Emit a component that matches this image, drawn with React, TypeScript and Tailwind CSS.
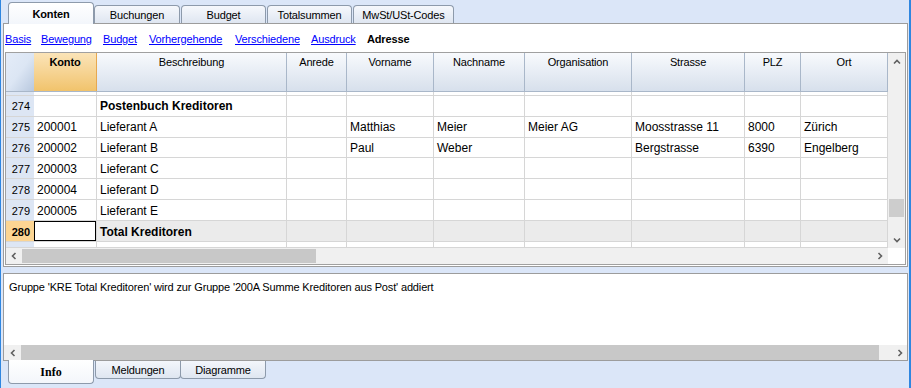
import React from 'react'

const UI = "font-['Liberation_Sans',Arial,sans-serif] text-[11px] leading-[13px]"

type Col = { key: string; label: string; w: string }

const COLS: Col[] = [
  { key: 'konto', label: 'Konto', w: 'w-[63px]' },
  { key: 'beschreibung', label: 'Beschreibung', w: 'w-[190px]' },
  { key: 'anrede', label: 'Anrede', w: 'w-[60px]' },
  { key: 'vorname', label: 'Vorname', w: 'w-[87px]' },
  { key: 'nachname', label: 'Nachname', w: 'w-[91px]' },
  { key: 'organisation', label: 'Organisation', w: 'w-[107px]' },
  { key: 'strasse', label: 'Strasse', w: 'w-[113px]' },
  { key: 'plz', label: 'PLZ', w: 'w-[56px]' },
  { key: 'ort', label: 'Ort', w: 'w-[87px]' },
]

type Row = { nr: number; cells: string[]; bold?: boolean; total?: boolean }

const ROWS: Row[] = [
  { nr: 274, cells: ['', 'Postenbuch Kreditoren'], bold: true },
  { nr: 275, cells: ['200001', 'Lieferant A', '', 'Matthias', 'Meier', 'Meier AG', 'Moosstrasse 11', '8000', 'Zürich'] },
  { nr: 276, cells: ['200002', 'Lieferant B', '', 'Paul', 'Weber', '', 'Bergstrasse', '6390', 'Engelberg'] },
  { nr: 277, cells: ['200003', 'Lieferant C'] },
  { nr: 278, cells: ['200004', 'Lieferant D'] },
  { nr: 279, cells: ['200005', 'Lieferant E'] },
  { nr: 280, cells: ['', 'Total Kreditoren'], bold: true, total: true },
]

// links with the slot each one takes in the bar
const LINKS: { label: string; w: string }[] = [
  { label: 'Basis', w: 'w-[36px]' },
  { label: 'Bewegung', w: 'w-[62px]' },
  { label: 'Budget', w: 'w-[46px]' },
  { label: 'Vorhergehende', w: 'w-[86px]' },
  { label: 'Verschiedene', w: 'w-[76px]' },
  { label: 'Ausdruck', w: 'w-[56px]' },
]

function Chevron({ dir }: { dir: 'up' | 'down' | 'left' | 'right' }) {
  const pts = {
    up: '1,5.5 4,2.5 7,5.5',
    down: '1,2.5 4,5.5 7,2.5',
    left: '5.5,1 2.5,4 5.5,7',
    right: '2.5,1 5.5,4 2.5,7',
  }[dir]
  return (
    <svg width="8" height="8" viewBox="0 0 8 8">
      <polyline points={pts} fill="none" stroke="#606060" strokeWidth="1.6" />
    </svg>
  )
}

function TopTab({ label, active, w, ml }: { label: string; active?: boolean; w: string; ml?: string }) {
  if (active) {
    return (
      <div
        className={`${w} ${ml ?? ''} relative z-10 mb-[-1px] flex h-[22px] justify-center rounded-t-[4px] border border-b-0 border-[#8d9aab] bg-gradient-to-b from-white to-[#f3f6fb] pt-[5px] font-bold text-black`}
      >
        {label}
      </div>
    )
  }
  return (
    <div
      className={`${w} ${ml ?? ''} flex h-[18px] justify-center rounded-t-[4px] border border-b-0 border-[#8d9aab] bg-gradient-to-b from-[#f6f8fc] to-[#dfe6f1] pt-[3px] text-black`}
    >
      {label}
    </div>
  )
}

function BottomTab({ label, active, w, ml }: { label: string; active?: boolean; w: string; ml?: string }) {
  if (active) {
    return (
      <div
        className={`${w} ${ml ?? ''} relative z-10 mt-[-1px] flex h-[24px] justify-center rounded-b-[4px] border border-t-0 border-[#8d9aab] bg-gradient-to-t from-[#f3f6fb] to-white pt-[6px] font-['Liberation_Serif',serif] text-[12px] font-bold tracking-normal text-black`}
      >
        {label}
      </div>
    )
  }
  return (
    <div
      className={`${w} ${ml ?? ''} flex h-[18px] justify-center rounded-b-[4px] border border-t-0 border-[#8d9aab] bg-gradient-to-t from-[#dfe6f1] to-[#f3f6fb] pt-[3px] text-black`}
    >
      {label}
    </div>
  )
}

function GridHeader() {
  return (
    <div className="flex h-[39px] border-b border-[#a9b7c9]">
      <div className="w-[28px] bg-gradient-to-br from-[#e4ecf8] via-[#dce6f4] to-[#b8c8de]" />
      {COLS.map((c) =>
        c.key === 'konto' ? (
          <div
            key={c.key}
            className={`${c.w} flex justify-center border-r border-[#e6a850] bg-gradient-to-b from-[#fbe4b8] to-[#f1c36b] pt-[3px] font-bold`}
          >
            {c.label}
          </div>
        ) : (
          <div
            key={c.key}
            className={`${c.w} flex justify-center border-r border-[#a9b7c9] bg-gradient-to-b from-[#f8fafd] to-[#d7e0ec] pt-[3px]`}
          >
            {c.label}
          </div>
        ),
      )}
    </div>
  )
}

function EmptyRow({ h }: { h: string }) {
  return (
    <div className={`flex ${h} border-b border-[#d6d6d6]`}>
      <div className="w-[28px] bg-[#dde6f4]" />
      {COLS.map((c) => (
        <div key={c.key} className={`${c.w} border-r border-[#d6d6d6]`} />
      ))}
    </div>
  )
}

function DataRow({ row }: { row: Row }) {
  return (
    <div className={`flex h-[21px] border-b border-[#d6d6d6] ${row.total ? 'bg-[#ebebeb]' : ''}`}>
      <div
        className={`flex w-[28px] items-center justify-end pr-[4px] pt-[2px] tracking-normal ${
          row.total ? 'bg-[#fcd593] font-bold' : 'bg-[#dde6f4]'
        }`}
      >
        {row.nr}
      </div>
      {COLS.map((c, i) => {
        const text = row.cells[i] ?? ''
        const selected = row.total && c.key === 'konto'
        return (
          <div key={c.key} className={`${c.w} border-r border-[#d6d6d6]`}>
            <div
              className={`flex h-full items-center overflow-hidden whitespace-nowrap pl-[3px] pt-[2px] text-[12px] tracking-normal ${
                row.bold && c.key === 'beschreibung' ? 'font-bold' : ''
              } ${selected ? 'border border-black bg-white' : ''}`}
            >
              {text}
            </div>
          </div>
        )
      })}
    </div>
  )
}

export default function App() {
  return (
    <div
      className={`${UI} flex h-[388px] w-[911px] flex-col overflow-hidden border-l border-r-2 border-[#2f86e0] bg-[#dbe6f8] tracking-[-0.15px] text-black`}
    >
      {/* top tabs */}
      <div className="flex h-[23px] items-end pl-[7px]">
        <TopTab label="Konten" active w="w-[86px]" />
        <TopTab label="Buchungen" w="w-[86px]" />
        <TopTab label="Budget" w="w-[85px]" ml="ml-[1px]" />
        <TopTab label="Totalsummen" w="w-[85px]" ml="ml-[1px]" />
        <TopTab label="MwSt/USt-Codes" w="w-[101px]" ml="ml-[1px]" />
      </div>

      {/* main panel */}
      <div className="ml-[2px] flex h-[244px] w-[905px] flex-col border border-[#9c9c9c] bg-white">
        <div className="flex h-[28px] items-start pl-[1px] pt-[9px]">
          {LINKS.map((l) => (
            <span key={l.label} className={`${l.w} shrink-0 whitespace-nowrap`}>
              <span className="text-[#0000ff] underline">{l.label}</span>
            </span>
          ))}
          <span className="font-bold">Adresse</span>
        </div>

        <div className="ml-[1px] flex h-[213px] w-[901px] flex-col border border-[#a0a0a0]">
          <div className="flex h-[195px]">
            <div className="flex w-[882px] flex-col overflow-hidden">
              <GridHeader />
              <EmptyRow h="h-[4px]" />
              {ROWS.map((r) => (
                <DataRow key={r.nr} row={r} />
              ))}
              <EmptyRow h="h-[6px]" />
            </div>
            {/* vertical scrollbar */}
            <div className="flex w-[17px] flex-col bg-[#f0f0f0]">
              <div className="flex h-[17px] items-center justify-center">
                <Chevron dir="up" />
              </div>
              <div className="h-[129px]" />
              <div className="mx-[1px] h-[18px] bg-[#cdcdcd]" />
              <div className="flex-1" />
              <div className="flex h-[17px] items-center justify-center">
                <Chevron dir="down" />
              </div>
            </div>
          </div>
          {/* horizontal scrollbar */}
          <div className="flex h-[16px]">
            <div className="flex w-[882px] bg-[#f0f0f0]">
              <div className="flex w-[16px] items-center justify-center">
                <Chevron dir="left" />
              </div>
              <div className="my-[1px] w-[294px] bg-[#c8c8c8]" />
              <div className="flex-1" />
              <div className="flex w-[16px] items-center justify-center">
                <Chevron dir="right" />
              </div>
            </div>
            <div className="w-[17px] bg-white" />
          </div>
        </div>
      </div>

      {/* info panel */}
      <div className="ml-[2px] mt-[6px] flex h-[88px] w-[905px] flex-col border border-[#9c9c9c] bg-white">
        <div className="h-[71px] whitespace-nowrap pl-[5px] pt-[7px]">
          Gruppe 'KRE Total Kreditoren' wird zur Gruppe '200A Summe Kreditoren aus Post' addiert
        </div>
        <div className="flex h-[15px]">
          <div className="flex w-[17px] items-center justify-center bg-[#f0f0f0]">
            <Chevron dir="left" />
          </div>
          <div className="flex-1 bg-[#c8c8c8]" />
          <div className="flex w-[28px] items-center justify-end bg-[#f0f0f0] pr-[3px]">
            <Chevron dir="right" />
          </div>
        </div>
      </div>

      {/* bottom tabs */}
      <div className="flex items-start pl-[7px]">
        <BottomTab label="Info" active w="w-[86px]" />
        <BottomTab label="Meldungen" w="w-[86px]" ml="ml-[1px]" />
        <BottomTab label="Diagramme" w="w-[86px]" ml="ml-[-1px]" />
      </div>
    </div>
  )
}
